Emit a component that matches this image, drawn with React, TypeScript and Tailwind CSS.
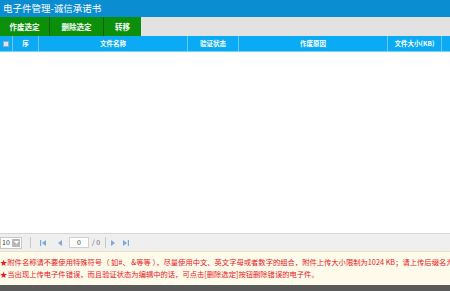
import React from "react";

const font = { fontFamily: '"Noto Sans CJK SC", "Liberation Sans", sans-serif' };

export default function App() {
  return (
    <div className="w-[450px] h-[291px] overflow-hidden flex flex-col bg-white" style={font}>
      {/* title */}
      <div className="h-[17px] bg-[#0b8dd2] flex items-center pl-[3px] text-white text-[9.5px] leading-none shrink-0">
        电子件管理-诚信承诺书
      </div>
      {/* toolbar */}
      <div className="h-[19px] bg-[#e2e2e2] flex shrink-0">
        <div className="w-[50px] bg-[#0c900c] text-white text-[7.5px] font-bold flex items-center justify-center border-r border-[#0a5f0a]">作废选定</div>
        <div className="w-[54px] bg-[#0c900c] text-white text-[7.5px] font-bold flex items-center justify-center border-r border-[#0a5f0a]">删除选定</div>
        <div className="w-[37px] bg-[#0c900c] text-white text-[7.5px] font-bold flex items-center justify-center">转移</div>
      </div>
      {/* header */}
      <div className="h-[16px] bg-[#0aaaf4] flex text-white text-[6.5px] font-bold shrink-0 border-b border-[#7fd0f8]">
        <div className="w-[13px] flex items-center justify-center border-r border-[#6cc8f6]">
          <div className="w-[6px] h-[6px] bg-[#d8e8f0] border border-[#9ab]"></div>
        </div>
        <div className="w-[26px] flex items-center justify-center border-r border-[#6cc8f6]">序</div>
        <div className="w-[149px] flex items-center justify-center border-r border-[#6cc8f6]">文件名称</div>
        <div className="w-[51px] flex items-center justify-center border-r border-[#6cc8f6]">验证状态</div>
        <div className="w-[149px] flex items-center justify-center border-r border-[#6cc8f6]">作废原因</div>
        <div className="w-[54px] flex items-center justify-center border-r border-[#6cc8f6]">文件大小(KB)</div>
        <div className="flex-1"></div>
      </div>
      {/* body */}
      <div className="flex-1 bg-white"></div>
      {/* pager */}
      <div className="h-[18px] bg-[#efefef] border-t border-[#d6d6d6] flex items-center text-[7px] text-[#333] shrink-0">
        <div className="w-[22px] h-[12px] bg-white border border-[#c8c8c8] flex items-center pl-[1px]">
          <span className="flex-1">10</span>
          <div className="w-[8px] h-[8px] bg-[#b8b8b8] mr-[1px] flex items-center justify-center">
            <svg width="5" height="3" viewBox="0 0 5 3"><path d="M0 0h5L2.5 3z" fill="#fff" /></svg>
          </div>
        </div>
        <div className="w-px h-[11px] bg-[#c8c8c8] ml-[8px] mr-[9px]"></div>
        <svg width="6" height="6" viewBox="0 0 6 6" className="mr-[12px]"><rect x="0" y="0" width="1.2" height="6" fill="#7aa8dc" /><path d="M6 0v6L2 3z" fill="#7aa8dc" /></svg>
        <svg width="4" height="6" viewBox="0 0 4 6" className="mr-[7px]"><path d="M4 0v6L0 3z" fill="#7aa8dc" /></svg>
        <div className="w-[20px] h-[11px] bg-white border border-[#d0d0d0] flex items-center justify-center">0</div>
        <span className="ml-[3px] text-[#666]">/ 0</span>
        <div className="w-px h-[11px] bg-[#c8c8c8] ml-[5px] mr-[5px]"></div>
        <svg width="4" height="6" viewBox="0 0 4 6" className="mr-[8px]"><path d="M0 0v6L4 3z" fill="#7aa8dc" /></svg>
        <svg width="6" height="6" viewBox="0 0 6 6"><path d="M0 0v6L4 3z" fill="#7aa8dc" /><rect x="4.8" y="0" width="1.2" height="6" fill="#7aa8dc" /></svg>
      </div>
      {/* notes */}
      <div className="h-[34px] bg-[#fffbea] border-t border-[#e6e0c8] flex flex-col justify-center gap-[5px] text-[7.3px] leading-none text-[#e8141e] whitespace-nowrap shrink-0">
        <div>★附件名称请不要使用特殊符号（ 如#、 &amp;等等 ），尽量使用中文、英文字母或者数字的组合，附件上传大小限制为1024 KB；请上传后缀名为</div>
        <div>★当出现上传电子件错误，而且验证状态为编辑中的话，可点击[删除选定]按钮删除错误的电子件。</div>
      </div>
      <div className="h-[6px] bg-[#5a5a5a] shrink-0"></div>
    </div>
  );
}
